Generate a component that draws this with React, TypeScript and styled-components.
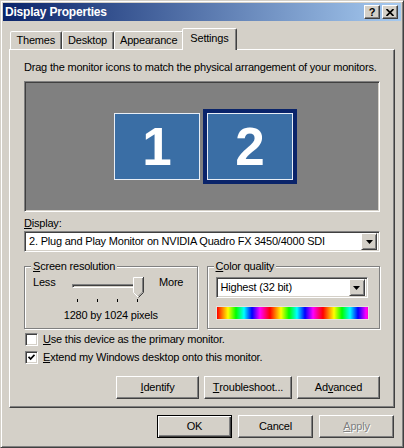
import React from 'react'
import styled, { createGlobalStyle, css } from 'styled-components'

const face = '#d4d0c8'

const GlobalStyle = createGlobalStyle`
  html, body {
    margin: 0;
    padding: 0;
    background: ${face};
  }
  body {
    font-family: 'Liberation Sans', Arial, sans-serif;
    font-size: 11px;
    letter-spacing: -0.2px;
    color: #000;
  }
  * {
    box-sizing: border-box;
  }
`

// classic 3d edges
const raised = css`
  border: 1px solid;
  border-color: #fff #404040 #404040 #fff;
  box-shadow: inset -1px -1px 0 #808080;
  background: ${face};
`
const sunken = css`
  border: 1px solid;
  border-color: #808080 #fff #fff #808080;
  box-shadow: inset 1px 1px 0 #404040, inset -1px -1px 0 ${face};
`

const Window = styled.div`
  width: 404px;
  height: 448px;
  background: ${face};
  border: 1px solid;
  border-color: ${face} #404040 #404040 ${face};
  box-shadow: inset 1px 1px 0 #fff, inset -1px -1px 0 #808080;
  padding: 2px;
  display: flex;
  flex-direction: column;
`

const TitleBar = styled.div`
  height: 18px;
  display: flex;
  align-items: center;
  justify-content: space-between;
  padding: 0 3px 0 2px;
  background: linear-gradient(90deg, #0a246a, #a6caf0);
`
const Title = styled.div`
  color: #fff;
  font-weight: bold;
  font-size: 12px;
  line-height: 14px;
`
const CaptionButtons = styled.div`
  display: flex;
  gap: 2px;
`
const CaptionButton = styled.div`
  ${raised}
  width: 16px;
  height: 14px;
  display: flex;
  align-items: center;
  justify-content: center;
  font-weight: bold;
  font-size: 11px;
  line-height: 11px;
  letter-spacing: 0;
`

const Body = styled.div`
  flex: 1;
  display: flex;
  flex-direction: column;
  padding: 7px 6px 0 6px;
`

const TabStrip = styled.div`
  height: 21px;
  display: flex;
  align-items: flex-end;
  padding-left: 1px;
`
const Tab = styled.div<{ $active?: boolean }>`
  height: ${({ $active }) => ($active ? '22px' : '18px')};
  margin: ${({ $active }) => ($active ? '0 -2px -1px' : '0')};
  padding: ${({ $active }) => ($active ? '3px 7.5px 0' : '2px 5.5px 0')};
  border: 1px solid;
  border-bottom: none;
  border-color: #fff #404040 transparent #fff;
  border-radius: 2px 2px 0 0;
  box-shadow: inset -1px 0 0 #808080;
  background: ${face};
  line-height: 13px;
  position: relative;
  z-index: ${({ $active }) => ($active ? 1 : 0)};
`

const TabPanel = styled.div`
  height: 359px;
  border: 1px solid;
  border-color: #fff #404040 #404040 #fff;
  box-shadow: inset -1px -1px 0 #808080;
  padding: 0 14px;
  display: flex;
  flex-direction: column;
`

const Hint = styled.div`
  margin-top: 11px;
  line-height: 13px;
`

const MonitorArea = styled.div`
  ${sunken}
  margin-top: 7px;
  height: 131px;
  background: #808080;
  display: flex;
  align-items: center;
  justify-content: center;
  gap: 7px;
  padding-left: 3px;
`
const Monitor = styled.div<{ $selected?: boolean }>`
  width: 86px;
  height: 67px;
  background: #3a6ea5;
  border: 1px solid #e8eef6;
  outline: ${({ $selected }) => ($selected ? '4px solid #0a246a' : 'none')};
  color: #fff;
  font-weight: bold;
  font-size: 53px;
  letter-spacing: 0;
  display: flex;
  align-items: center;
  justify-content: center;
`

const FieldLabel = styled.div`
  margin-top: 5px;
  line-height: 13px;
`

const Combo = styled.div<{ $width?: number }>`
  ${sunken}
  margin-top: ${({ $width }) => ($width ? '4px' : '1px')};
  width: ${({ $width }) => ($width ? `${$width}px` : 'auto')};
  height: 21px;
  background: #fff;
  display: flex;
  align-items: center;
  padding: 2px;
`
const ComboText = styled.div`
  flex: 1;
  padding-left: 2px;
  line-height: 13px;
  white-space: nowrap;
`
const DropButton = styled.div`
  ${raised}
  box-shadow: inset 1px 1px 0 ${face}, inset -1px -1px 0 #808080;
  width: 16px;
  height: 17px;
  display: flex;
  align-items: center;
  justify-content: center;
`

const GroupRow = styled.div`
  margin-top: 8px;
  display: grid;
  grid-template-columns: 1fr 1fr;
  gap: 9px;
`
const Group = styled.fieldset`
  margin: 0;
  height: 69px;
  padding: 0 8px 0 8px;
  border: 1px solid #808080;
  box-shadow: 1px 1px 0 #fff, inset 1px 1px 0 #fff;
  min-width: 0;
`
const Legend = styled.legend`
  margin-left: -2px;
  padding: 0 2px;
  line-height: 13px;
  background: ${face};
`

const SliderRow = styled.div`
  margin-top: 4px;
  display: grid;
  grid-template-columns: 39px 71px auto;
  align-items: start;
`
const SliderEnd = styled.div<{ $right?: boolean }>`
  line-height: 13px;
  margin-top: -1px;
  margin-left: ${({ $right }) => ($right ? '16px' : '0')};
`
const Slider = styled.div`
  position: relative;
  height: 25px;
  display: flex;
  flex-direction: column;
`
const Track = styled.div`
  margin-top: 7px;
  height: 4px;
  border: 1px solid;
  border-color: #808080 #fff #fff #808080;
  box-shadow: inset 1px 1px 0 #404040;
  margin-right: 3px;
`
const Thumb = styled.svg`
  position: absolute;
  top: 0;
`
const Ticks = styled.div`
  margin-top: 11px;
  padding: 0 5px;
  display: flex;
  justify-content: space-between;
`
const Tick = styled.div`
  width: 1px;
  height: 3px;
  background: #000;
`
const Caption = styled.div`
  margin-top: 7px;
  text-align: center;
  line-height: 13px;
`

const ColorBar = styled.div`
  margin-top: 8px;
  width: 153px;
  height: 14px;
  border: 1px solid #e4e2dc;
  background: repeating-linear-gradient(
    90deg,
    #ff0000 0px,
    #ff8c00 6px,
    #ffff00 11px,
    #00ff00 19px,
    #00ffff 27px,
    #0000ff 35px,
    #ff00ff 43px,
    #ff0000 53px
  );
`

const CheckList = styled.div`
  margin-top: 1px;
  display: flex;
  flex-direction: column;
`
const CheckRow = styled.div`
  height: 18px;
  display: flex;
  align-items: center;
  gap: 5px;
  padding-left: 1px;
  line-height: 13px;
`
const CheckBox = styled.div`
  ${sunken}
  width: 13px;
  height: 13px;
  background: #fff;
  display: flex;
  align-items: center;
  justify-content: center;
`

const ButtonRow = styled.div<{ $gap: number }>`
  display: flex;
  justify-content: flex-end;
  gap: ${({ $gap }) => $gap}px;
`
const PanelButtons = styled(ButtonRow)`
  margin-top: 10px;
`
const DialogButtons = styled(ButtonRow)`
  margin-top: 7px;
  padding-right: 1px;
`

const Button = styled.div<{ $w: number; $default?: boolean; $disabled?: boolean }>`
  ${raised}
  width: ${({ $w }) => $w}px;
  height: 23px;
  display: flex;
  align-items: center;
  justify-content: center;
  line-height: 13px;
  ${({ $default }) =>
    $default &&
    css`
      border-color: #000;
      box-shadow: inset 1px 1px 0 #fff, inset -1px -1px 0 #404040, inset -2px -2px 0 #808080;
    `}
  ${({ $disabled }) =>
    $disabled &&
    css`
      color: #808080;
      text-shadow: 1px 1px 0 #fff;
    `}
`

const tabs = ['Themes', 'Desktop', 'Appearance', 'Settings']

const Arrow = () => (
  <svg width="7" height="4" viewBox="0 0 7 4">
    <polygon points="0,0 7,0 3.5,4" fill="#000" />
  </svg>
)

const Check = () => (
  <svg width="7" height="7" viewBox="0 0 7 7">
    <path d="M0.5 2.8 L2.6 5 L6.5 0.8" stroke="#000" strokeWidth="1.8" fill="none" />
  </svg>
)

export default function App() {
  return (
    <>
      <GlobalStyle />
      <Window>
        <TitleBar>
          <Title>Display Properties</Title>
          <CaptionButtons>
            <CaptionButton>?</CaptionButton>
            <CaptionButton>
              <svg width="8" height="7" viewBox="0 0 8 7">
                <path d="M0.5 0 L7.5 7 M7.5 0 L0.5 7" stroke="#000" strokeWidth="1.7" />
              </svg>
            </CaptionButton>
          </CaptionButtons>
        </TitleBar>
        <Body>
          <TabStrip>
            {tabs.map(t => (
              <Tab key={t} $active={t === 'Settings'}>
                {t}
              </Tab>
            ))}
          </TabStrip>
          <TabPanel>
            <Hint>Drag the monitor icons to match the physical arrangement of your monitors.</Hint>
            <MonitorArea>
              <Monitor>1</Monitor>
              <Monitor $selected>2</Monitor>
            </MonitorArea>
            <FieldLabel>
              <u>D</u>isplay:
            </FieldLabel>
            <Combo>
              <ComboText>2. Plug and Play Monitor on NVIDIA Quadro FX 3450/4000 SDI</ComboText>
              <DropButton>
                <Arrow />
              </DropButton>
            </Combo>
            <GroupRow>
              <Group>
                <Legend>
                  <u>S</u>creen resolution
                </Legend>
                <SliderRow>
                  <SliderEnd>Less</SliderEnd>
                  <Slider>
                    <Track />
                    <Thumb width="11" height="21" viewBox="0 0 11 21" style={{ left: 61 }}>
                      <polygon points="0.5,0.5 10.5,0.5 10.5,15.5 5.5,20.5 0.5,15.5" fill={face} />
                      <polyline points="0.5,15.5 0.5,0.5 10,0.5" stroke="#fff" fill="none" />
                      <polyline points="10.5,0 10.5,15.5 5.5,20.5" stroke="#404040" fill="none" />
                      <polyline points="9.5,1 9.5,15 5.5,19" stroke="#808080" fill="none" />
                      <line x1="0.5" y1="15.5" x2="5" y2="20" stroke="#fff" />
                    </Thumb>
                    <Ticks>
                      <Tick />
                      <Tick />
                      <Tick />
                      <Tick />
                    </Ticks>
                  </Slider>
                  <SliderEnd $right>More</SliderEnd>
                </SliderRow>
                <Caption>1280 by 1024 pixels</Caption>
              </Group>
              <Group>
                <Legend>
                  <u>C</u>olor quality
                </Legend>
                <Combo $width={152}>
                  <ComboText>Highest (32 bit)</ComboText>
                  <DropButton>
                    <Arrow />
                  </DropButton>
                </Combo>
                <ColorBar />
              </Group>
            </GroupRow>
            <CheckList>
              <CheckRow>
                <CheckBox />
                <span>
                  <u>U</u>se this device as the primary monitor.
                </span>
              </CheckRow>
              <CheckRow>
                <CheckBox>
                  <Check />
                </CheckBox>
                <span>
                  <u>E</u>xtend my Windows desktop onto this monitor.
                </span>
              </CheckRow>
            </CheckList>
            <PanelButtons $gap={5}>
              <Button $w={83}>
                <u>I</u>dentify
              </Button>
              <Button $w={88}>
                <u>T</u>roubleshoot...
              </Button>
              <Button $w={83}>
                Ad<u>v</u>anced
              </Button>
            </PanelButtons>
          </TabPanel>
          <DialogButtons $gap={6}>
            <Button $w={75} $default>
              OK
            </Button>
            <Button $w={75}>Cancel</Button>
            <Button $w={75} $disabled>
              <u>A</u>pply
            </Button>
          </DialogButtons>
        </Body>
      </Window>
    </>
  )
}
